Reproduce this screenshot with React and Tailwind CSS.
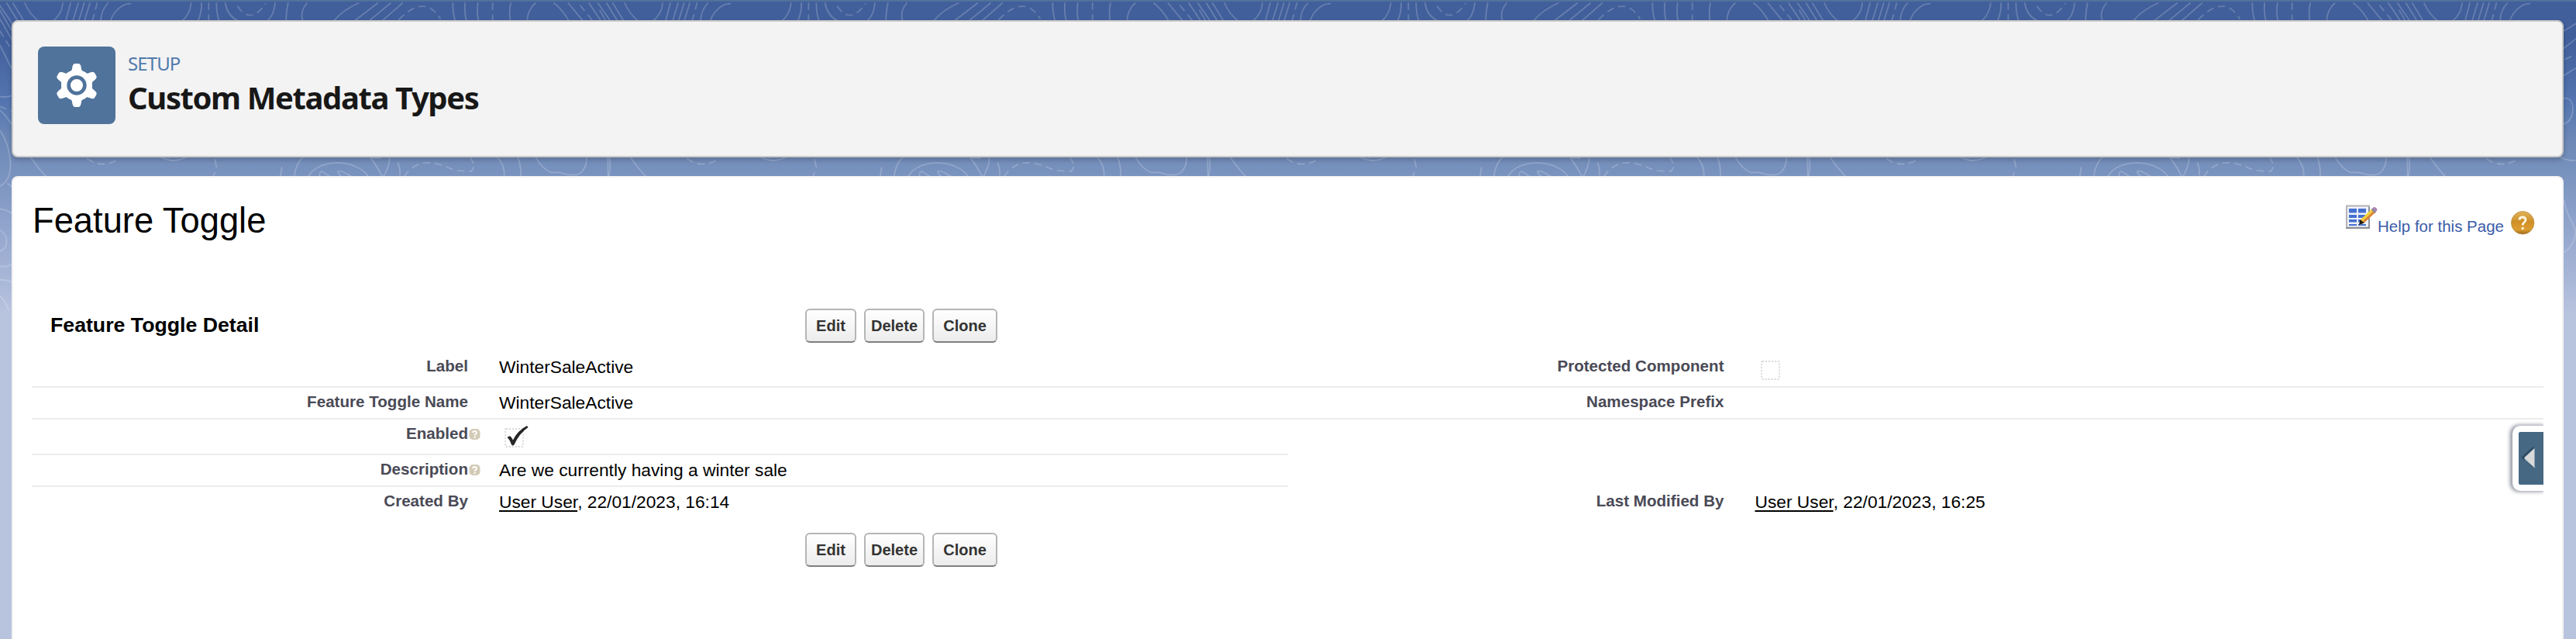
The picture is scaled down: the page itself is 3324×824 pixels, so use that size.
import React from "react";

const PERIOD = 2322;

const solid = [
  // upper band
  "M2145 12Q2175 35 2202 80", "M-122 12L-66 80", "M-42 12L4 80L45 152", "M-7 12L40 80L52 100", "M26 12L68 80", "M50 12L92 80",
  "M96 12Q115 55 148 80", "M243 12Q240 55 206 80", "M273 12L255 80", "M303 12L282 80", "M326 12L305 80", "M348 12L327 80",
  "M418 12Q392 40 390 80", "M505 14C470 14 438 48 428 80", "M740 12Q735 55 706 80", "M780 12Q782 45 767 80",
  "M838 12Q838 50 848 80", "M872 12Q880 60 920 80", "M1065 12Q1060 60 1036 80", "M1115 12Q1108 45 1107 80",
  "M1188 12Q1160 45 1172 80", "M1388 12Q1328 38 1293 80", "M1462 12L1373 80", "M1512 12L1430 80", "M1558 12L1480 80",
  "M1753 12Q1752 45 1762 80", "M1800 12Q1798 50 1805 80", "M1850 12Q1845 50 1852 80", "M1977 12Q1970 45 1975 80",
  "M2072 12Q2042 40 2041 80",
  // lower band
  "M113 600Q150 655 180 684", "M620 606Q670 636 724 606", "M832 618L838 646", "M831 668L825 684", "M1091 648L1085 684",
  "M1139 684C1143 645 1158 620 1178 604", "M1193 684C1230 612 1380 612 1427 684", "M1237 684Q1237 655 1252 667L1280 684",
  "M1322 684Q1300 662 1312 661Q1325 660 1362 684", "M1430 604Q1465 650 1480 684", "M1440 610L1472 612", "M1508 604Q1510 640 1484 684",
  "M1540 630Q1550 650 1548 676", "M1922 604Q1956 640 1952 684", "M2003 604Q2018 640 2016 684",
  "M2071 604Q2100 655 2135 668Q2160 664 2190 674Q2240 684 2256 660Q2275 635 2270 604", "M2353 604L2354 684",
  // left gutter
  "M0 40L45 118", "M0 175L45 265", "M0 373Q25 378 46 370", "M0 425Q25 450 46 482",
  "M0 505C40 560 50 655 30 690Q18 712 0 720", "M30 710L46 722", "M0 808Q25 811 46 825", "M0 890C34 910 34 960 0 972",
  "M0 1030Q25 1036 46 1022", "M0 1083Q25 1080 46 1092", "M0 1145Q20 1165 34 1200",
  // right gutter
  "M637 120L686 90", "M637 187L686 148", "M637 292L686 262", "M637 380Q672 376 672 425Q668 470 637 480",
  "M637 775C650 840 668 850 682 890Q686 940 640 975",
];

const dashed = [
  "M376 12L358 80", "M808 12L808 80", "M920 25Q970 98 1028 14", "M1907 12L1907 80", "M1545 75Q1645 -25 1704 72",
  "M338 614Q402 658 466 610", "M1566 682Q1625 590 1760 660L1825 663L1838 640L1822 612", "M0 120L40 185", "M-75 22L-28 80",
  "M642 230L672 214", "M0 412L46 430",
];

function Contours() {
  return (
    <svg className="absolute inset-0 h-[420px] w-[3324px]" viewBox="0 6 9972 1260" fill="none" stroke="#fff" aria-hidden="true">
      {[0, 1, 2, 3, 4].map((i) => (
        <g key={i} transform={`translate(${i * PERIOD} 0)`} strokeWidth="5.5" strokeOpacity="0.2" strokeLinecap="round">
          {solid.map((d) => (
            <path key={d} d={d} />
          ))}
          <g strokeDasharray="24 22">
            {dashed.map((d) => (
              <path key={d} d={d} />
            ))}
          </g>
        </g>
      ))}
    </svg>
  );
}

function GearIcon() {
  return (
    <svg className="h-[100px] w-[100px]" viewBox="0 0 300 300" aria-hidden="true">
      <g fill="#fff">
        {[0, 60, 120, 180, 240, 300].map((a) => (
          <path key={a} transform={`rotate(${a} 150 150)`} d="M133 80Q135 66 144 66H156Q165 66 167 80L169 91Q171 96 180 98L186 110H114L120 98Q129 96 131 91Z" />
        ))}
        <circle cx="150" cy="150" r="60" />
      </g>
      <circle cx="150" cy="150" r="31" fill="#fff" stroke="#50739b" strokeWidth="14" />
    </svg>
  );
}

function ListPencilIcon() {
  return (
    <svg className="h-[31px] w-[41px]" viewBox="0 0 41 31" aria-hidden="true">
      <rect x="1" y="1.5" width="29" height="28" fill="#eef2fb" stroke="#b4b4b4" strokeWidth="2" />
      <path d="M0 30H30V3" fill="none" stroke="#8d9096" strokeWidth="2" />
      <g fill="#4470d0">
        <rect x="4" y="5" width="10" height="5.500" /><rect x="16" y="5" width="10" height="5.500" />
        <rect x="4" y="13" width="10" height="4" /><rect x="16" y="13" width="9" height="4" />
        <rect x="4" y="19" width="10" height="3.500" /><rect x="16" y="19" width="4" height="3.500" />
        <rect x="4" y="25" width="10" height="2" /><rect x="16" y="25" width="10" height="2" />
      </g>
      <path d="M18 26L19 19L34 5L39 9L24 23Z" fill="#f4cf3c" />
      <path d="M24 23L39 9L37 7L22 21Z" fill="#d9823a" />
      <path d="M17 26L18.500 19L24 23.500Z" fill="#1d1a17" />
      <path d="M33 6L36 3Q40 3 40.500 7L38 10Z" fill="#a884b4" />
      <path d="M32.500 6.500L34 5L38.800 9.500L37.500 11Z" fill="#8b8b93" />
    </svg>
  );
}

function HelpIcon() {
  return (
    <svg className="h-[31px] w-[31px]" viewBox="0 0 31 31" aria-hidden="true">
      <defs>
        <linearGradient id="amber" x1="0" y1="0" x2="0" y2="1">
          <stop offset="0" stopColor="#e0b35a" />
          <stop offset="0.45" stopColor="#cf8f27" />
          <stop offset="0.8" stopColor="#dd9d2e" />
          <stop offset="1" stopColor="#9a6a22" />
        </linearGradient>
      </defs>
      <circle cx="15.200" cy="15.300" r="14.700" fill="url(#amber)" stroke="#b98a3d" strokeWidth="0.800" />
      <path d="M10.800 11.500Q11.200 8 15 8T19 11.400Q19 13.500 17 14.800Q15.200 16 15.200 18.600" fill="none" stroke="#fff6e0" strokeWidth="2.800" />
      <circle cx="15.200" cy="22.500" r="1.700" fill="#fff6e0" />
    </svg>
  );
}

function HintIcon() {
  return (
    <svg className="mt-[6px] h-[14px] w-[15px]" viewBox="0 0 15 14" aria-hidden="true">
      <rect x="0.500" y="0" width="14" height="14" rx="5" fill="#d3cbb6" />
      <path d="M5 5Q5.300 3 7.500 3T10 5Q10 6.300 8.600 7Q7.600 7.600 7.600 8.800" fill="none" stroke="#fff" strokeWidth="1.900" />
      <rect x="6.700" y="10" width="2" height="2" fill="#fff" />
    </svg>
  );
}

function Checkbox({ checked }) {
  return (
    <svg className="h-[32px] w-[34px]" viewBox="0 0 34 32" aria-hidden="true">
      <rect x="2" y="6" width="23" height="23" rx="1" fill="none" stroke="#dadada" strokeWidth="1.800" strokeDasharray="2.200 1.800" />
      {checked && <path d="M4.500 17Q8 14.500 9.500 16.500L12 20.500Q18 8 30 2L31.500 4Q20 12 13.500 26.500Q11 28.500 9.800 26Q7.500 19.500 4.500 17Z" fill="#262626" />}
    </svg>
  );
}

function Buttons() {
  const base =
    "h-[44px] rounded-[6px] border-2 border-[#b5b5b5] border-b-[#7f7f7f] bg-linear-to-b from-white to-[#ececec] text-[20px] leading-[40px] font-bold text-[#333]";
  return (
    <div className="flex gap-[10px]">
      <button className={`${base} w-[66px]`}>Edit</button>
      <button className={`${base} w-[78px]`}>Delete</button>
      <button className={`${base} w-[84px]`}>Clone</button>
    </div>
  );
}

function Field({ label, hint, line = true, tall, children }) {
  return (
    <div className={`flex w-1/2 ${tall ? "h-[46px]" : "h-[41px]"} ${line ? "border-b-2 border-[#ececec]" : ""}`}>
      <div className="w-[563px] pt-[6px] text-right text-[20.600px] leading-[24px] font-bold whitespace-nowrap text-[#4a4a56]">{label}</div>
      <div className="w-[40px] pt-[6px] pl-[1px]">{hint && <HintIcon />}</div>
      <div className="pt-[5px] text-[22.750px] leading-[28px] whitespace-nowrap text-black">{children}</div>
    </div>
  );
}

function Stamp({ when }) {
  return (
    <>
      <a className="underline decoration-2 underline-offset-[3px]">User User</a>, {when}
    </>
  );
}

export default function App() {
  return (
    <div className="relative h-[824px] w-[3324px] overflow-hidden border-t-2 border-[#50739b] bg-[#b8c3de] bg-[linear-gradient(to_bottom,#415f9b_0px,#415f9b_48px,#5475b0_130px,#6c88b6_175px,#7a93bf_225px,#98aad0_310px,#b8c3de_402px)] font-['Liberation_Sans',Arial,sans-serif]">
      <Contours />
      <div className="relative flex h-full flex-col gap-6 pt-6 pr-4 pl-[15px]">
        <header className="flex h-[177px] shrink-0 gap-4 rounded-[8px] border-2 border-[#c9c9c9] bg-[#f3f3f3] pt-8 pl-8 shadow-[0_3px_6px_rgba(0,0,0,0.22)]">
          <div className="h-[100px] w-[100px] rounded-[8px] bg-[#50739b]">
            <GearIcon />
          </div>
          <div className="pt-[6px] font-['Noto_Sans','Open_Sans',sans-serif]">
            <div className="text-[24px] leading-[32px] tracking-[-0.900px] text-[#5179ab]">SETUP</div>
            <h1 className="pt-[3px] text-[40px] leading-[50px] font-bold tracking-[-1.400px] text-[#181818]">Custom Metadata Types</h1>
          </div>
        </header>

        <main className="relative flex-1 rounded-t-[8px] border-2 border-b-0 border-[#f3f3f3] bg-white px-6">
          <div className="flex h-[140px] justify-between pt-[30px] pl-px">
            <h2 className="text-[45.300px] leading-[51px] text-black">Feature Toggle</h2>
            <div className="flex pt-[5px] pr-[11px]">
              <ListPencilIcon />
              <a className="pt-[16px] text-[20.500px] leading-[24px] whitespace-nowrap text-[#3b5ca8]">Help for this Page</a>
              <div className="pt-[8px] pl-[9px]">
                <HelpIcon />
              </div>
            </div>
          </div>

          <div className="flex pt-[29px] pl-[24px]">
            <h3 className="w-[974px] pt-[5px] text-[26.700px] leading-[32px] font-bold text-black">Feature Toggle Detail</h3>
            <Buttons />
          </div>

          <section className="flex w-[3241px] flex-col pt-3">
            <div className="flex">
              <Field label="Label" tall>WinterSaleActive</Field>
              <Field label="Protected Component" tall>
                <div className="pt-[1px] pl-[6px]"><Checkbox /></div>
              </Field>
            </div>
            <div className="flex">
              <Field label="Feature Toggle Name">WinterSaleActive</Field>
              <Field label="Namespace Prefix" />
            </div>
            <Field label="Enabled" hint tall>
              <div className="pt-[1px] pl-[6px]"><Checkbox checked /></div>
            </Field>
            <Field label="Description" hint>Are we currently having a winter sale</Field>
            <div className="flex">
              <Field label="Created By" line={false}><Stamp when="22/01/2023, 16:14" /></Field>
              <Field label="Last Modified By" line={false}><Stamp when="22/01/2023, 16:25" /></Field>
            </div>
          </section>

          <div className="pt-[18px] pl-[998px]">
            <Buttons />
          </div>

          <div className="absolute top-[312px] right-[24px] h-[100px] w-[56px] overflow-hidden">
            <div className="mt-[8px] ml-[16px] h-[84px] w-[48px] rounded-[10px] bg-white pt-[8px] pl-[8px] shadow-[-2px_0_5px_1px_rgba(70,75,95,0.6)]">
              <div className="h-[68px] w-[40px] rounded-[2px] bg-[#476883]">
                <svg className="h-[68px] w-[32px]" viewBox="0 0 32 68" aria-hidden="true">
                  <path d="M19 20L5 33L19 45" fill="none" stroke="#2f4c63" strokeWidth="2.500" />
                  <path d="M8 35L21 46" stroke="#6e93a8" strokeWidth="2" />
                  <path d="M7 33.500L20.500 21V46Z" fill="#d9d9d9" />
                </svg>
              </div>
            </div>
          </div>
        </main>
      </div>
    </div>
  );
}
